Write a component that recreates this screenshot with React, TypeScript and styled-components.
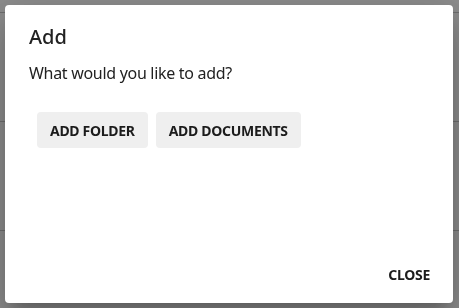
import React from "react";
import styled, { createGlobalStyle } from "styled-components";

const GlobalStyle = createGlobalStyle`
    html, body {
        margin: 0;
        padding: 0;
        background: #ffffff;
        font-family: "Segoe UI", "Noto Sans", "Open Sans", sans-serif;
    }
`;

const Page = styled.div`
    width: 459px;
    height: 308px;
    overflow: hidden;
    padding-top: 12px;
    box-sizing: border-box;
`;

const PageRow = styled.div`
    height: 109px;
    border-top: 1px solid #c8c8c8;
    box-sizing: border-box;
`;

const Backdrop = styled.div`
    position: fixed;
    inset: 0;
    background: rgba(0, 0, 0, 0.45);
    display: flex;
    align-items: flex-start;
    justify-content: flex-start;
`;

const Dialog = styled.div`
    margin: 5px;
    width: 448px;
    height: 298px;
    background: #fff;
    border-radius: 4px;
    box-shadow: 0 11px 15px -7px rgba(0, 0, 0, 0.2), 0 24px 38px 3px rgba(0, 0, 0, 0.14),
        0 9px 46px 8px rgba(0, 0, 0, 0.12);
    display: flex;
    flex-direction: column;
    box-sizing: border-box;
`;

const Title = styled.h2`
    margin: 0;
    padding: 16px 24px 8px;
    font-size: 20px;
    font-weight: 500;
    line-height: 32px;
    color: #222;
`;

const Content = styled.div`
    flex: 1;
    padding: 0 24px;
`;

const Message = styled.p`
    margin: 0 0 27px;
    font-size: 16px;
    line-height: 24px;
    letter-spacing: -0.3px;
    color: #222;
`;

const Choices = styled.div`
    display: flex;
    gap: 8px;
    padding-left: 8px;
`;

const Button = styled.button<{ $filled?: boolean }>`
    height: 36px;
    padding: 0 ${(p) => (p.$filled ? "13px" : "8px")};
    border: none;
    border-radius: 4px;
    background: ${(p) => (p.$filled ? "#efefef" : "transparent")};
    color: #1c1c1c;
    font-family: inherit;
    font-size: 14px;
    font-weight: 700;
    letter-spacing: -0.3px;
    text-transform: uppercase;
    cursor: pointer;
`;

const Actions = styled.div`
    display: flex;
    justify-content: flex-end;
    padding: 5px 15px 11px 8px;
`;

export default function App() {
    return (
        <>
            <GlobalStyle />
            <Page>
                <PageRow />
                <PageRow />
                <PageRow />
            </Page>
            <Backdrop>
                <Dialog role="dialog">
                    <Title>Add</Title>
                    <Content>
                        <Message>What would you like to add?</Message>
                        <Choices>
                            <Button $filled>Add folder</Button>
                            <Button $filled>Add documents</Button>
                        </Choices>
                    </Content>
                    <Actions>
                        <Button>Close</Button>
                    </Actions>
                </Dialog>
            </Backdrop>
        </>
    );
}
